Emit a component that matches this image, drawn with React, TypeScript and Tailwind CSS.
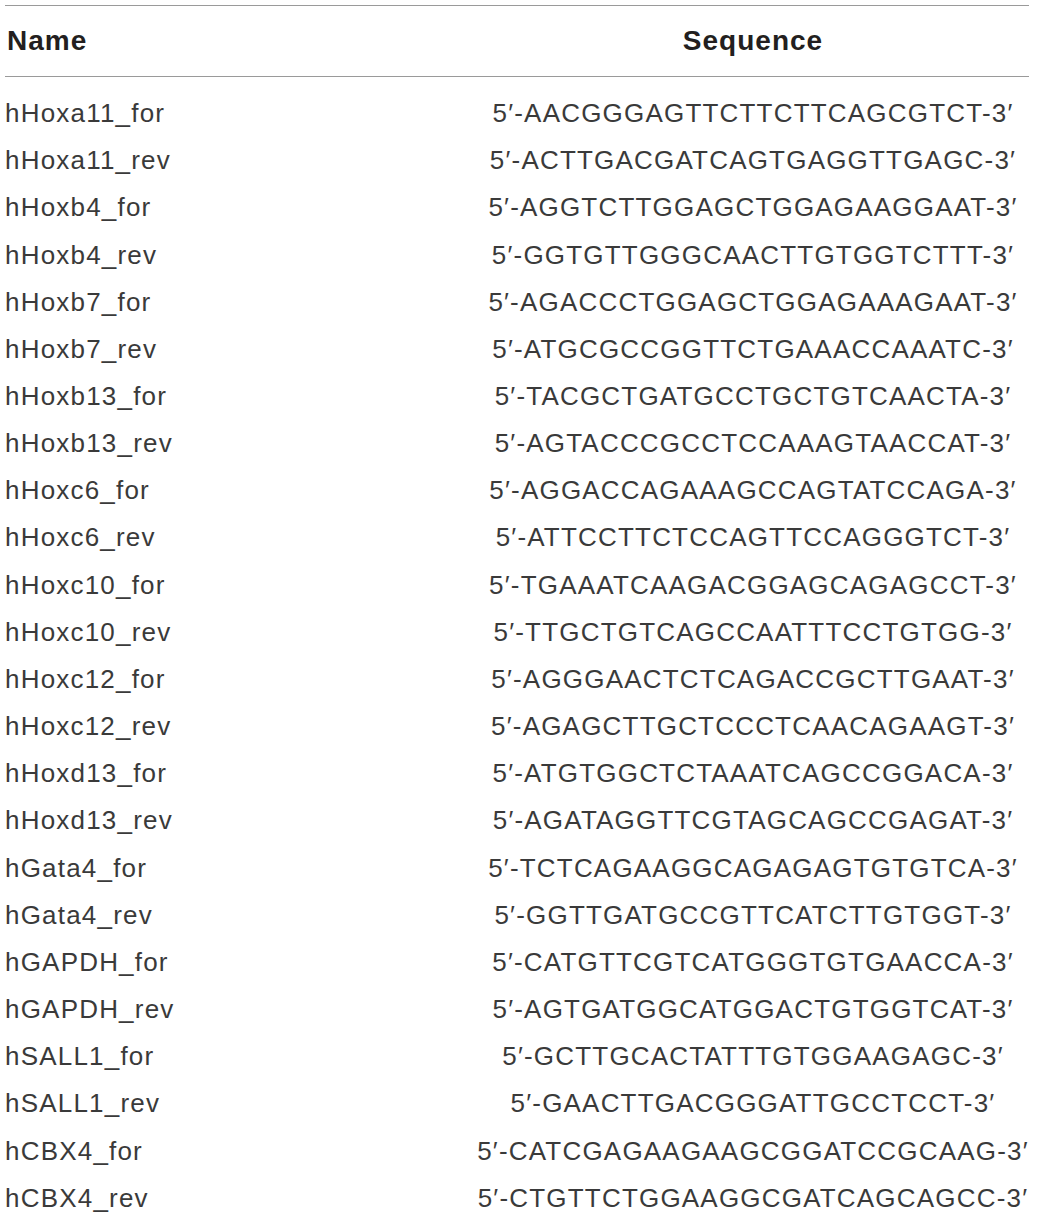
const primers: [string, string][] = [
  ["hHoxa11_for", "5′-AACGGGAGTTCTTCTTCAGCGTCT-3′"],
  ["hHoxa11_rev", "5′-ACTTGACGATCAGTGAGGTTGAGC-3′"],
  ["hHoxb4_for", "5′-AGGTCTTGGAGCTGGAGAAGGAAT-3′"],
  ["hHoxb4_rev", "5′-GGTGTTGGGCAACTTGTGGTCTTT-3′"],
  ["hHoxb7_for", "5′-AGACCCTGGAGCTGGAGAAAGAAT-3′"],
  ["hHoxb7_rev", "5′-ATGCGCCGGTTCTGAAACCAAATC-3′"],
  ["hHoxb13_for", "5′-TACGCTGATGCCTGCTGTCAACTA-3′"],
  ["hHoxb13_rev", "5′-AGTACCCGCCTCCAAAGTAACCAT-3′"],
  ["hHoxc6_for", "5′-AGGACCAGAAAGCCAGTATCCAGA-3′"],
  ["hHoxc6_rev", "5′-ATTCCTTCTCCAGTTCCAGGGTCT-3′"],
  ["hHoxc10_for", "5′-TGAAATCAAGACGGAGCAGAGCCT-3′"],
  ["hHoxc10_rev", "5′-TTGCTGTCAGCCAATTTCCTGTGG-3′"],
  ["hHoxc12_for", "5′-AGGGAACTCTCAGACCGCTTGAAT-3′"],
  ["hHoxc12_rev", "5′-AGAGCTTGCTCCCTCAACAGAAGT-3′"],
  ["hHoxd13_for", "5′-ATGTGGCTCTAAATCAGCCGGACA-3′"],
  ["hHoxd13_rev", "5′-AGATAGGTTCGTAGCAGCCGAGAT-3′"],
  ["hGata4_for", "5′-TCTCAGAAGGCAGAGAGTGTGTCA-3′"],
  ["hGata4_rev", "5′-GGTTGATGCCGTTCATCTTGTGGT-3′"],
  ["hGAPDH_for", "5′-CATGTTCGTCATGGGTGTGAACCA-3′"],
  ["hGAPDH_rev", "5′-AGTGATGGCATGGACTGTGGTCAT-3′"],
  ["hSALL1_for", "5′-GCTTGCACTATTTGTGGAAGAGC-3′"],
  ["hSALL1_rev", "5′-GAACTTGACGGGATTGCCTCCT-3′"],
  ["hCBX4_for", "5′-CATCGAGAAGAAGCGGATCCGCAAG-3′"],
  ["hCBX4_rev", "5′-CTGTTCTGGAAGGCGATCAGCAGCC-3′"],
];

export default function App() {
  return (
    <div className="w-[1039px] h-[1220px] bg-white pt-[5px] pl-[5px] font-['Liberation_Sans',Arial,sans-serif]">
      <div className="w-[1024px]">
        <div className="grid grid-cols-[472px_552px] h-[72px] items-center border-y border-[#9a9a9a] text-[28px] tracking-[1px] font-bold text-[#231f20]">
          <div className="pl-[2px]">Name</div>
          <div className="text-center">Sequence</div>
        </div>
        <div className="pt-[13px]">
          {primers.map(([name, seq]) => (
            <div
              key={name}
              className="grid grid-cols-[472px_552px] h-[47.17px] items-center text-[26px] tracking-[1.2px] text-[#3a3a3a] whitespace-nowrap"
            >
              <div>{name}</div>
              <div className="flex justify-center">
                <span>{seq}</span>
              </div>
            </div>
          ))}
        </div>
      </div>
    </div>
  );
}
